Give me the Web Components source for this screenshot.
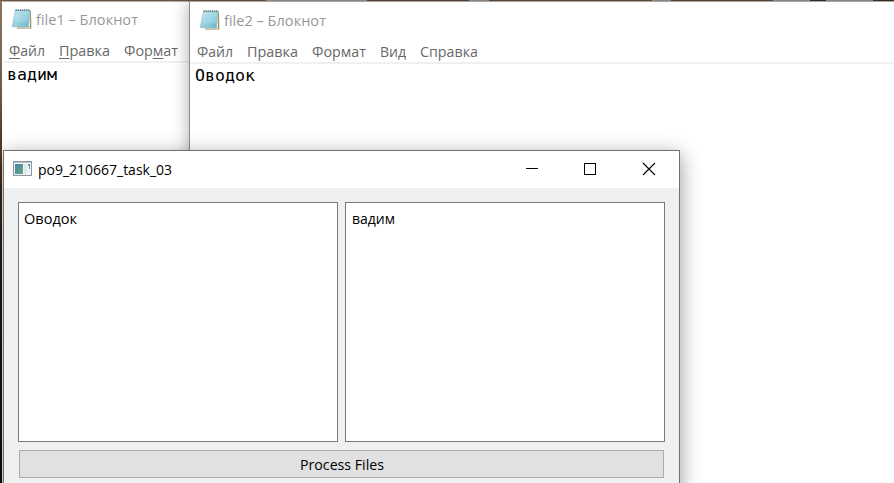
<!DOCTYPE html>
<html lang="ru">
<head>
<meta charset="utf-8">
<title>Desktop</title>
<style>
html,body{margin:0;width:894px;height:483px;overflow:hidden}
</style>
</head>
<body>
<desk-top>
  <note-pad id="n1" heading="file1 – Блокнот" heading-width="102" menu="_Файл:36:14|_Правка:51:14|Фор_мат:54:0" body="вадим" body-width="50"></note-pad>
  <note-pad id="n2" heading="file2 – Блокнот" heading-width="102" menu="Файл:36:14|Правка:51:14|Формат:54:14|Вид:26:14|Справка:58:0" body="Оводок" body-width="60"></note-pad>
  <app-window id="app"></app-window>
</desk-top>
<script>
// A single line of text, condensed or widened to the width in its "w" attribute.
class FitText extends HTMLElement {
  connectedCallback() {
    if (!this.shadowRoot) {
      this.attachShadow({mode: 'open'}).innerHTML = `<style>
        :host{display:block;white-space:nowrap;flex:none}
        span{display:inline-block;transform-origin:0 50%}
      </style><span><slot></slot></span>`;
    }
    const w = Number(this.getAttribute('w'));
    this.style.width = w + 'px';
    const s = this.shadowRoot.querySelector('span');
    s.style.transform = 'scaleX(' + w / s.getBoundingClientRect().width + ')';
  }
}

class DeskTop extends HTMLElement {
  constructor() {
    super();
    this.attachShadow({mode: 'open'}).innerHTML = `<style>
      :host{display:block;position:relative;width:894px;height:483px;overflow:hidden;
        background:
          linear-gradient(90deg,#6b5647 0 266px,#999 266px 367px,#5c493f 367px 469px,#999 469px 489px,#66523d 489px 652px,#999 652px 671px,#5e4c38 671px 773px,#999 773px 810px,#3f342a 810px 826px,#999 826px 873px,#40352d 873px) 0 0/100% 1px no-repeat,
          linear-gradient(#8a7560,#73614d 80px,#4b3a2c 140px,#5b3d1e 152px,#39281c 190px,#21150f 300px,#160d0b)}
      ::slotted(*){position:absolute}
      ::slotted(#n1){left:2px;top:1px;width:500px;height:482px;--top:#b8aaa0}
      ::slotted(#n2){left:189px;top:1px;width:720px;height:500px;--left:#8c8c8c;--top:#aaa4a0;
        --pad:1px;box-shadow:-1px 2px 15px rgba(0,0,0,.3)}
      ::slotted(#app){left:3px;top:150px;width:677px;height:350px}
    </style><slot></slot>`;
  }
}

class NotepadIcon extends HTMLElement {
  constructor() {
    super();
    this.attachShadow({mode: 'open'}).innerHTML = `<style>:host{display:block;width:22px;height:22px;flex:none}svg{display:block}</style>
    <svg width="22" height="22" viewBox="0 0 22 22">
      <defs><linearGradient id="g" x1="0" y1="0" x2="1" y2="1"><stop offset="0" stop-color="#c4e8ee"/><stop offset=".55" stop-color="#94d0de"/><stop offset="1" stop-color="#65b2c7"/></linearGradient></defs>
      <path d="M5 3.2L20 2.5 20.3 20.5 6 20.5z" fill="#9a8965"/>
      <path d="M4.5 2.5H19.2L19 19.8 4 19.5z" fill="#f4efdc"/>
      <path d="M4.5 2.5H19L17.4 19 1.2 18.5z" fill="url(#g)" stroke="#7eb9c8" stroke-width=".6"/>
      <path d="M4.3 5H18M4 7H17.8M3.6 9H17.6M3.1 11H17.4M2.7 13H17.2" stroke="#cceaf0" stroke-width=".6" opacity=".6"/>
      <path d="M4.5 2.2H19" stroke="#66828b" stroke-width="1.8" stroke-dasharray="1.3 .8"/>
    </svg>`;
  }
}

class NotePad extends HTMLElement {
  connectedCallback() {
    if (this.shadowRoot) return;
    const items = this.getAttribute('menu').split('|').map(m => {
      const [t, w, gap] = m.split(':');
      return `<fit-text w="${w}" style="margin-right:${gap}px">${t.replace(/_(.)/, '<u>$1</u>')}</fit-text>`;
    }).join('');
    this.attachShadow({mode: 'open'}).innerHTML = `<style>
      :host{display:flex;flex-direction:column;box-sizing:border-box;background:#fff;
        border-left:1px solid var(--left,#fff);border-top:1px solid var(--top);
        font:15px "Open Sans","Noto Sans",sans-serif}
      header{display:flex;align-items:center;height:calc(34px + var(--pad,0px));padding:var(--pad,0px) 0 0 calc(8px + var(--pad,0px));color:#989898;box-sizing:border-box}
      header fit-text{margin-left:calc(3px - 0px)}
      nav{display:flex;align-items:center;height:22px;padding:3px 0 0 calc(6px + var(--pad,0px));color:#676767;
        border-bottom:2px solid #f0f0f0}
      u{text-underline-offset:2px;text-decoration-thickness:1px}
      main{padding:3px 0 0 calc(4px + var(--pad,0px));color:#000;font:16.5px/18px "DejaVu Sans Mono",monospace}
    </style>
    <header><notepad-icon></notepad-icon><fit-text w="${this.getAttribute('heading-width')}">${this.getAttribute('heading')}</fit-text></header>
    <nav>${items}</nav>
    <main><fit-text w="${this.getAttribute('body-width')}">${this.getAttribute('body')}</fit-text></main>`;
  }
}

class TextPane extends HTMLElement {
  constructor() {
    super();
    this.attachShadow({mode: 'open'}).innerHTML = `<style>
      :host{display:block;box-sizing:border-box;width:320px;height:240px;border:1px solid #7a7a7a;background:#fff;padding:6px 5px;line-height:20px}
    </style><slot></slot>`;
  }
}

class PushButton extends HTMLElement {
  constructor() {
    super();
    this.attachShadow({mode: 'open'}).innerHTML = `<style>
      :host{display:flex;align-items:center;justify-content:center;box-sizing:border-box;width:645px;height:28px;border:1px solid #adadad;background:#e1e1e1}
    </style><slot></slot>`;
  }
}

class AppWindow extends HTMLElement {
  constructor() {
    super();
    this.attachShadow({mode: 'open'}).innerHTML = `<style>
      :host{display:flex;flex-direction:column;box-sizing:border-box;border:1px solid #707070;background:#f0f0f0;
        box-shadow:0 5px 19px rgba(0,0,0,.42);font:15px "Open Sans","Noto Sans",sans-serif;color:#000}
      header{display:flex;align-items:center;box-sizing:border-box;height:37px;background:#fff;padding:0 4px 2px 9px}
      header fit-text{margin-left:6px}
      .controls{margin-left:auto;display:flex}
      svg{display:block;flex:none}
      main{display:flex;flex-direction:column;padding:14px 0 0 14px}
      .panes{display:flex;gap:7px}
      push-button{margin:8px 0 0 1px}
      text-pane,push-button{font-size:14.5px}
      text-pane + text-pane{padding-left:6px}
    </style>
    <header>
      <svg width="19" height="15" viewBox="0 0 19 15">
        <defs><linearGradient id="a" x1="0" y1="0" x2="1" y2="1"><stop offset="0" stop-color="#4b7fa5"/><stop offset="1" stop-color="#5fae80"/></linearGradient></defs>
        <rect x=".5" y=".5" width="18" height="14" fill="#f3f4f5" stroke="#8e959e"/>
        <path d="M1 1.5H18" stroke="#b9c0c8"/>
        <rect x="2" y="3" width="8" height="10" fill="url(#a)"/>
        <rect x="11" y="3" width="3" height="10" fill="#e3e6e9"/>
        <path d="M15 3H17V8H16V5H15z" fill="#5c9f94"/>
      </svg>
      <fit-text w="134">po9_210667_task_03</fit-text>
      <div class="controls">
        <svg width="58" height="35" viewBox="0 0 58 35"><path d="M24 17.5H36" stroke="#000"/></svg>
        <svg width="58" height="35" viewBox="0 0 58 35"><rect x="24.5" y="12.5" width="11" height="11" fill="none" stroke="#000"/></svg>
        <svg width="57" height="35" viewBox="0 0 57 35"><path d="M25 12L37 24M37 12L25 24" stroke="#000" stroke-width="1.1"/></svg>
      </div>
    </header>
    <main>
      <div class="panes">
        <text-pane><fit-text w="53">Оводок</fit-text></text-pane>
        <text-pane><fit-text w="43">вадим</fit-text></text-pane>
      </div>
      <push-button><fit-text w="84">Process Files</fit-text></push-button>
    </main>`;
  }
}

customElements.define('fit-text', FitText);
customElements.define('notepad-icon', NotepadIcon);
customElements.define('text-pane', TextPane);
customElements.define('push-button', PushButton);
customElements.define('note-pad', NotePad);
customElements.define('app-window', AppWindow);
customElements.define('desk-top', DeskTop);
</script>
</body>
</html>
